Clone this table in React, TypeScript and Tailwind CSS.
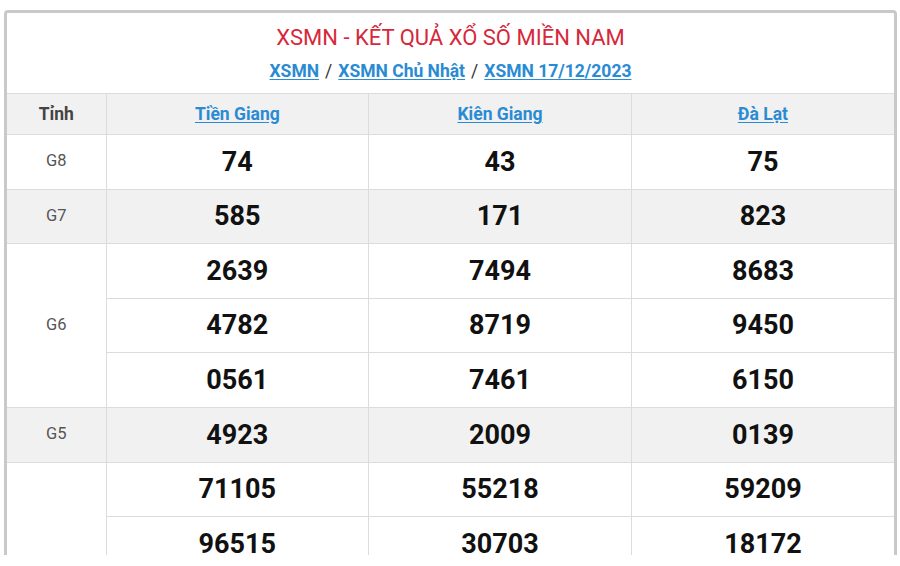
const provinces = ["Tiền Giang", "Kiên Giang", "Đà Lạt"];

type Prize = { label: string; rows: string[][]; shaded?: boolean };

const prizes: Prize[] = [
  { label: "G8", rows: [["74", "43", "75"]] },
  { label: "G7", rows: [["585", "171", "823"]], shaded: true },
  {
    label: "G6",
    rows: [
      ["2639", "7494", "8683"],
      ["4782", "8719", "9450"],
      ["0561", "7461", "6150"],
    ],
  },
  { label: "G5", rows: [["4923", "2009", "0139"]], shaded: true },
  {
    label: "G4",
    rows: [
      ["71105", "55218", "59209"],
      ["96515", "30703", "18172"],
      ["45710", "12871", "66402"],
      ["08839", "94107", "31256"],
      ["27734", "60385", "85027"],
      ["50912", "73649", "04480"],
      ["13086", "29951", "72318"],
    ],
  },
];

export default function App() {
  return (
    <div
      className="w-[900px] h-[566px] bg-white overflow-hidden"
      style={{ fontFamily: "Roboto, 'Liberation Sans', sans-serif" }}
    >
      <div className="h-[555px] overflow-hidden pt-[10px] pl-[4px]">
        <div className="w-[893px] border-[3px] border-b-0 border-[#c9c9c9] rounded-t-[4px] bg-white">
          {/* header */}
          <div className="h-[80px] flex flex-col items-center">
            <h1 className="mt-[11px] text-[22px] leading-[28px] text-[#d6283a] font-normal">
              XSMN - KẾT QUẢ XỔ SỐ MIỀN NAM
            </h1>
            <div className="mt-[8px] text-[17.5px] leading-[22px] font-bold text-[#333]">
              <a href="#" className="text-[#2a8bd3] underline underline-offset-2">XSMN</a>
              <span className="mx-[6px] font-normal">/</span>
              <a href="#" className="text-[#2a8bd3] underline underline-offset-2">XSMN Chủ Nhật</a>
              <span className="mx-[6px] font-normal">/</span>
              <a href="#" className="text-[#2a8bd3] underline underline-offset-2">XSMN 17/12/2023</a>
            </div>
          </div>

          <table className="w-full border-collapse table-fixed">
            <colgroup>
              <col className="w-[99px]" />
              <col />
              <col />
              <col />
            </colgroup>
            <thead>
              <tr className="h-[41px] bg-[#f1f1f1]">
                <th className="border-y border-r border-[#dcdcdc] text-[17.5px] font-bold text-[#444]">Tỉnh</th>
                {provinces.map((p, i) => (
                  <th
                    key={p}
                    className={`border-y border-[#dcdcdc] ${i < 2 ? "border-r" : ""} text-[17.5px] font-bold`}
                  >
                    <a href="#" className="text-[#2a8bd3] underline underline-offset-2">{p}</a>
                  </th>
                ))}
              </tr>
            </thead>
            <tbody>
              {prizes.map((prize) =>
                prize.rows.map((row, ri) => (
                  <tr key={prize.label + ri} className={`h-[54.6px] ${prize.shaded ? "bg-[#f1f1f1]" : "bg-white"}`}>
                    {ri === 0 && (
                      <td
                        rowSpan={prize.rows.length}
                        className="border-y border-r border-[#dcdcdc] text-center text-[16.5px] text-[#555]"
                      >
                        {prize.label}
                      </td>
                    )}
                    {row.map((n, ci) => (
                      <td
                        key={ci}
                        className={`border-y border-[#dcdcdc] ${ci < 2 ? "border-r" : ""} text-center text-[27px] font-bold text-[#111]`}
                      >
                        {n}
                      </td>
                    ))}
                  </tr>
                ))
              )}
            </tbody>
          </table>
        </div>
      </div>
    </div>
  );
}
